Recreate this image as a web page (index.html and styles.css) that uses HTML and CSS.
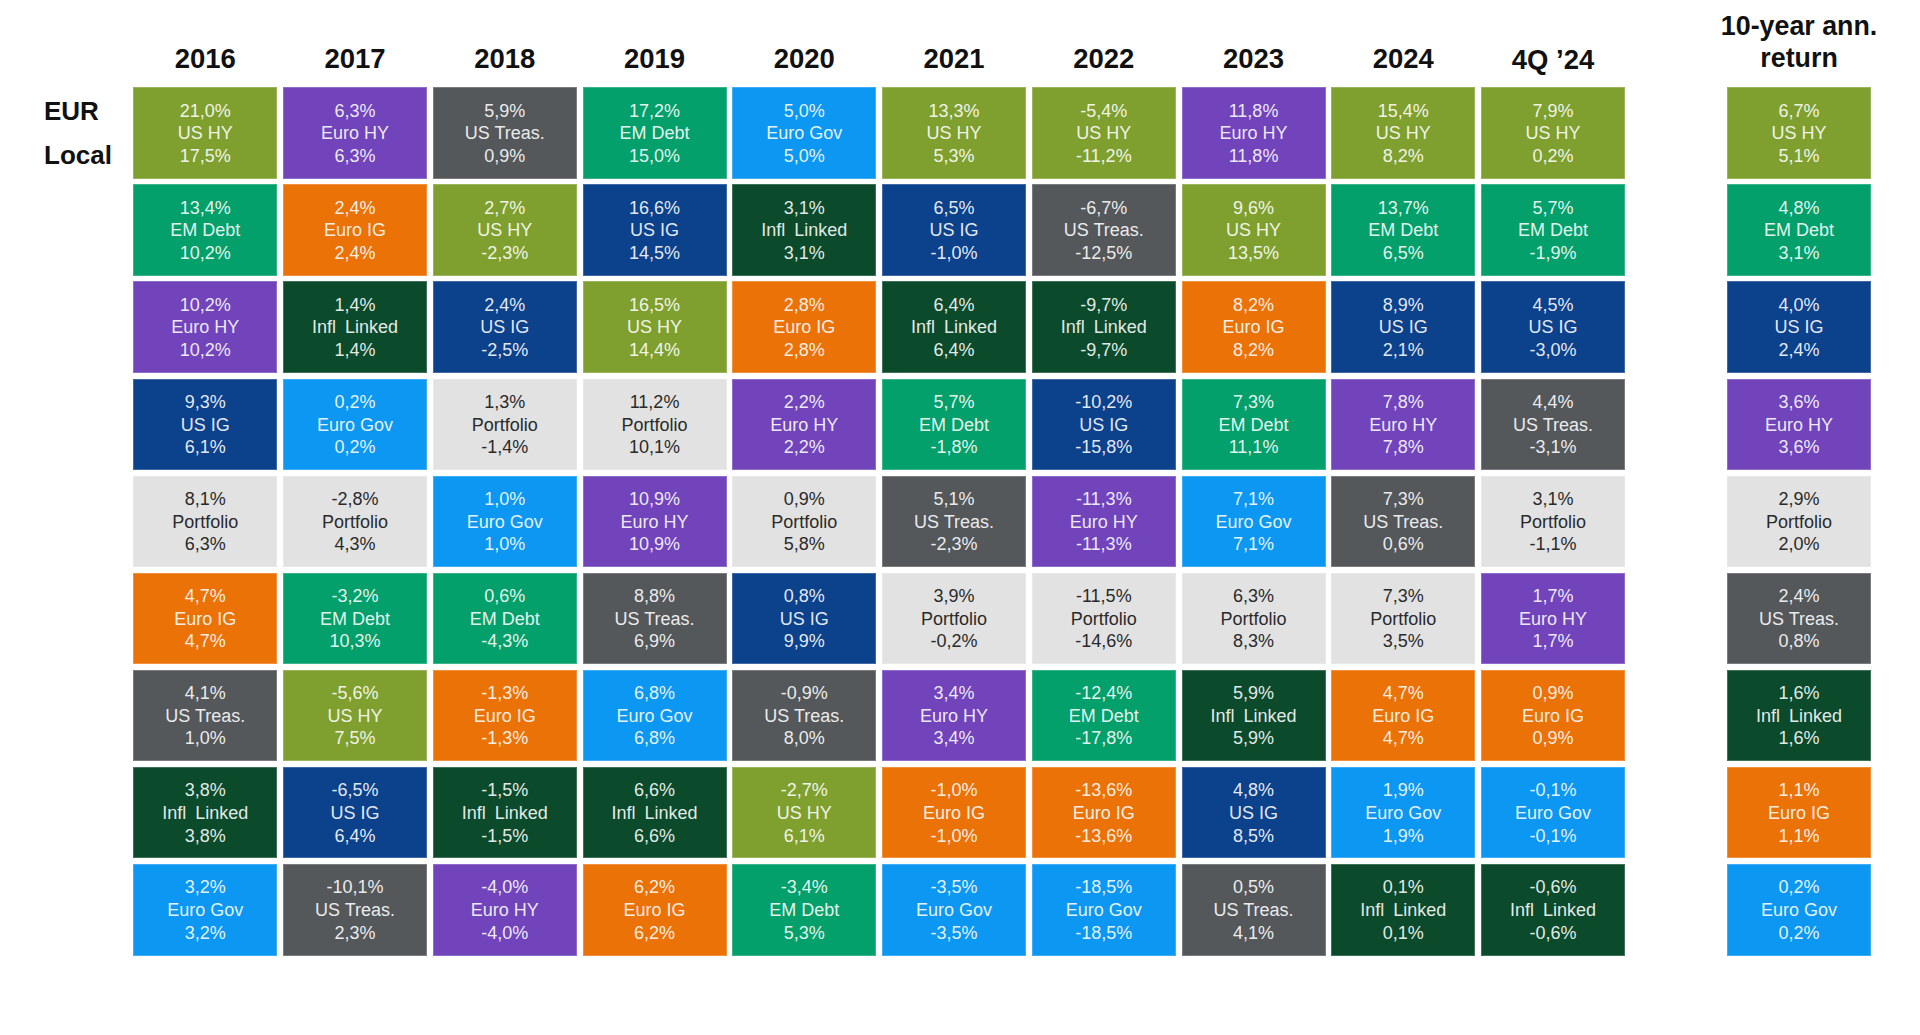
FILE: index.html
```html
<!DOCTYPE html>
<html lang="en">
<head>
<meta charset="utf-8">
<title>Fixed income returns</title>
<link rel="stylesheet" href="styles.css">
</head>
<body>
<div class="chart">
  <div class="labels">
    <div class="head"></div>
    <div class="rowlabels">
      <div class="rl">EUR</div>
      <div class="rl">Local</div>
    </div>
  </div>

  <div class="years">
    <div class="col">
      <div class="head"><span>2016</span></div>
      <div class="cells">
        <div class="cell ushy">21,0%<br>US HY<br>17,5%</div>
        <div class="cell em">13,4%<br>EM Debt<br>10,2%</div>
        <div class="cell eurohy">10,2%<br>Euro HY<br>10,2%</div>
        <div class="cell usig">9,3%<br>US IG<br>6,1%</div>
        <div class="cell port">8,1%<br>Portfolio<br>6,3%</div>
        <div class="cell euroig">4,7%<br>Euro IG<br>4,7%</div>
        <div class="cell treas">4,1%<br>US Treas.<br>1,0%</div>
        <div class="cell infl">3,8%<br>Infl&ensp;Linked<br>3,8%</div>
        <div class="cell gov">3,2%<br>Euro Gov<br>3,2%</div>
      </div>
    </div>
    <div class="col">
      <div class="head"><span>2017</span></div>
      <div class="cells">
        <div class="cell eurohy">6,3%<br>Euro HY<br>6,3%</div>
        <div class="cell euroig">2,4%<br>Euro IG<br>2,4%</div>
        <div class="cell infl">1,4%<br>Infl&ensp;Linked<br>1,4%</div>
        <div class="cell gov">0,2%<br>Euro Gov<br>0,2%</div>
        <div class="cell port">-2,8%<br>Portfolio<br>4,3%</div>
        <div class="cell em">-3,2%<br>EM Debt<br>10,3%</div>
        <div class="cell ushy">-5,6%<br>US HY<br>7,5%</div>
        <div class="cell usig">-6,5%<br>US IG<br>6,4%</div>
        <div class="cell treas">-10,1%<br>US Treas.<br>2,3%</div>
      </div>
    </div>
    <div class="col">
      <div class="head"><span>2018</span></div>
      <div class="cells">
        <div class="cell treas">5,9%<br>US Treas.<br>0,9%</div>
        <div class="cell ushy">2,7%<br>US HY<br>-2,3%</div>
        <div class="cell usig">2,4%<br>US IG<br>-2,5%</div>
        <div class="cell port">1,3%<br>Portfolio<br>-1,4%</div>
        <div class="cell gov">1,0%<br>Euro Gov<br>1,0%</div>
        <div class="cell em">0,6%<br>EM Debt<br>-4,3%</div>
        <div class="cell euroig">-1,3%<br>Euro IG<br>-1,3%</div>
        <div class="cell infl">-1,5%<br>Infl&ensp;Linked<br>-1,5%</div>
        <div class="cell eurohy">-4,0%<br>Euro HY<br>-4,0%</div>
      </div>
    </div>
    <div class="col">
      <div class="head"><span>2019</span></div>
      <div class="cells">
        <div class="cell em">17,2%<br>EM Debt<br>15,0%</div>
        <div class="cell usig">16,6%<br>US IG<br>14,5%</div>
        <div class="cell ushy">16,5%<br>US HY<br>14,4%</div>
        <div class="cell port">11,2%<br>Portfolio<br>10,1%</div>
        <div class="cell eurohy">10,9%<br>Euro HY<br>10,9%</div>
        <div class="cell treas">8,8%<br>US Treas.<br>6,9%</div>
        <div class="cell gov">6,8%<br>Euro Gov<br>6,8%</div>
        <div class="cell infl">6,6%<br>Infl&ensp;Linked<br>6,6%</div>
        <div class="cell euroig">6,2%<br>Euro IG<br>6,2%</div>
      </div>
    </div>
    <div class="col">
      <div class="head"><span>2020</span></div>
      <div class="cells">
        <div class="cell gov">5,0%<br>Euro Gov<br>5,0%</div>
        <div class="cell infl">3,1%<br>Infl&ensp;Linked<br>3,1%</div>
        <div class="cell euroig">2,8%<br>Euro IG<br>2,8%</div>
        <div class="cell eurohy">2,2%<br>Euro HY<br>2,2%</div>
        <div class="cell port">0,9%<br>Portfolio<br>5,8%</div>
        <div class="cell usig">0,8%<br>US IG<br>9,9%</div>
        <div class="cell treas">-0,9%<br>US Treas.<br>8,0%</div>
        <div class="cell ushy">-2,7%<br>US HY<br>6,1%</div>
        <div class="cell em">-3,4%<br>EM Debt<br>5,3%</div>
      </div>
    </div>
    <div class="col">
      <div class="head"><span>2021</span></div>
      <div class="cells">
        <div class="cell ushy">13,3%<br>US HY<br>5,3%</div>
        <div class="cell usig">6,5%<br>US IG<br>-1,0%</div>
        <div class="cell infl">6,4%<br>Infl&ensp;Linked<br>6,4%</div>
        <div class="cell em">5,7%<br>EM Debt<br>-1,8%</div>
        <div class="cell treas">5,1%<br>US Treas.<br>-2,3%</div>
        <div class="cell port">3,9%<br>Portfolio<br>-0,2%</div>
        <div class="cell eurohy">3,4%<br>Euro HY<br>3,4%</div>
        <div class="cell euroig">-1,0%<br>Euro IG<br>-1,0%</div>
        <div class="cell gov">-3,5%<br>Euro Gov<br>-3,5%</div>
      </div>
    </div>
    <div class="col">
      <div class="head"><span>2022</span></div>
      <div class="cells">
        <div class="cell ushy">-5,4%<br>US HY<br>-11,2%</div>
        <div class="cell treas">-6,7%<br>US Treas.<br>-12,5%</div>
        <div class="cell infl">-9,7%<br>Infl&ensp;Linked<br>-9,7%</div>
        <div class="cell usig">-10,2%<br>US IG<br>-15,8%</div>
        <div class="cell eurohy">-11,3%<br>Euro HY<br>-11,3%</div>
        <div class="cell port">-11,5%<br>Portfolio<br>-14,6%</div>
        <div class="cell em">-12,4%<br>EM Debt<br>-17,8%</div>
        <div class="cell euroig">-13,6%<br>Euro IG<br>-13,6%</div>
        <div class="cell gov">-18,5%<br>Euro Gov<br>-18,5%</div>
      </div>
    </div>
    <div class="col">
      <div class="head"><span>2023</span></div>
      <div class="cells">
        <div class="cell eurohy">11,8%<br>Euro HY<br>11,8%</div>
        <div class="cell ushy">9,6%<br>US HY<br>13,5%</div>
        <div class="cell euroig">8,2%<br>Euro IG<br>8,2%</div>
        <div class="cell em">7,3%<br>EM Debt<br>11,1%</div>
        <div class="cell gov">7,1%<br>Euro Gov<br>7,1%</div>
        <div class="cell port">6,3%<br>Portfolio<br>8,3%</div>
        <div class="cell infl">5,9%<br>Infl&ensp;Linked<br>5,9%</div>
        <div class="cell usig">4,8%<br>US IG<br>8,5%</div>
        <div class="cell treas">0,5%<br>US Treas.<br>4,1%</div>
      </div>
    </div>
    <div class="col">
      <div class="head"><span>2024</span></div>
      <div class="cells">
        <div class="cell ushy">15,4%<br>US HY<br>8,2%</div>
        <div class="cell em">13,7%<br>EM Debt<br>6,5%</div>
        <div class="cell usig">8,9%<br>US IG<br>2,1%</div>
        <div class="cell eurohy">7,8%<br>Euro HY<br>7,8%</div>
        <div class="cell treas">7,3%<br>US Treas.<br>0,6%</div>
        <div class="cell port">7,3%<br>Portfolio<br>3,5%</div>
        <div class="cell euroig">4,7%<br>Euro IG<br>4,7%</div>
        <div class="cell gov">1,9%<br>Euro Gov<br>1,9%</div>
        <div class="cell infl">0,1%<br>Infl&ensp;Linked<br>0,1%</div>
      </div>
    </div>
    <div class="col">
      <div class="head q"><span>4Q ’24</span></div>
      <div class="cells">
        <div class="cell ushy">7,9%<br>US HY<br>0,2%</div>
        <div class="cell em">5,7%<br>EM Debt<br>-1,9%</div>
        <div class="cell usig">4,5%<br>US IG<br>-3,0%</div>
        <div class="cell treas">4,4%<br>US Treas.<br>-3,1%</div>
        <div class="cell port">3,1%<br>Portfolio<br>-1,1%</div>
        <div class="cell eurohy">1,7%<br>Euro HY<br>1,7%</div>
        <div class="cell euroig">0,9%<br>Euro IG<br>0,9%</div>
        <div class="cell gov">-0,1%<br>Euro Gov<br>-0,1%</div>
        <div class="cell infl">-0,6%<br>Infl&ensp;Linked<br>-0,6%</div>
      </div>
    </div>
  </div>

  <div class="col ten">
    <div class="head tenhead"><span>10-year ann.<br>return</span></div>
    <div class="cells">
      <div class="cell ushy">6,7%<br>US HY<br>5,1%</div>
      <div class="cell em">4,8%<br>EM Debt<br>3,1%</div>
      <div class="cell usig">4,0%<br>US IG<br>2,4%</div>
      <div class="cell eurohy">3,6%<br>Euro HY<br>3,6%</div>
      <div class="cell port">2,9%<br>Portfolio<br>2,0%</div>
      <div class="cell treas">2,4%<br>US Treas.<br>0,8%</div>
      <div class="cell infl">1,6%<br>Infl&ensp;Linked<br>1,6%</div>
      <div class="cell euroig">1,1%<br>Euro IG<br>1,1%</div>
      <div class="cell gov">0,2%<br>Euro Gov<br>0,2%</div>
    </div>
  </div>
</div>
</body>
</html>
```

FILE: styles.css
```css
html, body {
  margin: 0;
  padding: 0;
  background: #ffffff;
}

body {
  width: 1920px;
  height: 1035px;
  overflow: hidden;
  font-family: "Liberation Sans", Arial, sans-serif;
}

.chart {
  display: flex;
  align-items: flex-start;
}

.labels {
  width: 133.3px;
  flex: none;
}

.head {
  height: 87.3px;
  box-sizing: border-box;
  padding-bottom: 12px;
  display: flex;
  align-items: flex-end;
  justify-content: center;
  text-align: center;
  font-weight: bold;
  font-size: 27.5px;
  line-height: 32px;
  color: #111111;
}

.head.q {
  padding-bottom: 11px;
}

.tenhead {
  font-size: 26.8px;
  padding-bottom: 13px;
  white-space: nowrap;
}

.rowlabels {
  padding-left: 44px;
  padding-top: 1.5px;
}

.rl {
  font-weight: bold;
  font-size: 26px;
  line-height: 44px;
  color: #111111;
}

.years {
  display: flex;
  gap: 5.75px;
  flex: none;
}

.col {
  width: 144px;
  flex: none;
}

.ten {
  margin-left: 102px;
}

.cells {
  display: flex;
  flex-direction: column;
  gap: 5.6px;
}

.cell {
  height: 91.5px;
  box-sizing: border-box;
  padding-top: 1px;
  display: flex;
  align-items: center;
  justify-content: center;
  text-align: center;
  font-size: 18px;
  line-height: 22.6px;
  color: rgba(255, 255, 255, 0.9);
  box-shadow: inset 0 0 0 1px rgba(255, 255, 255, 0.22);
}

.ushy   { background: #7fa02f; }
.eurohy { background: #7144bc; }
.treas  { background: #55585b; }
.em     { background: #03a06b; }
.gov    { background: #0c97f3; }
.usig   { background: #0c418c; }
.infl   { background: #0b4b2c; }
.euroig { background: #eb7207; }
.port   { background: #e2e2e3; color: #2a2a2a; }
```
